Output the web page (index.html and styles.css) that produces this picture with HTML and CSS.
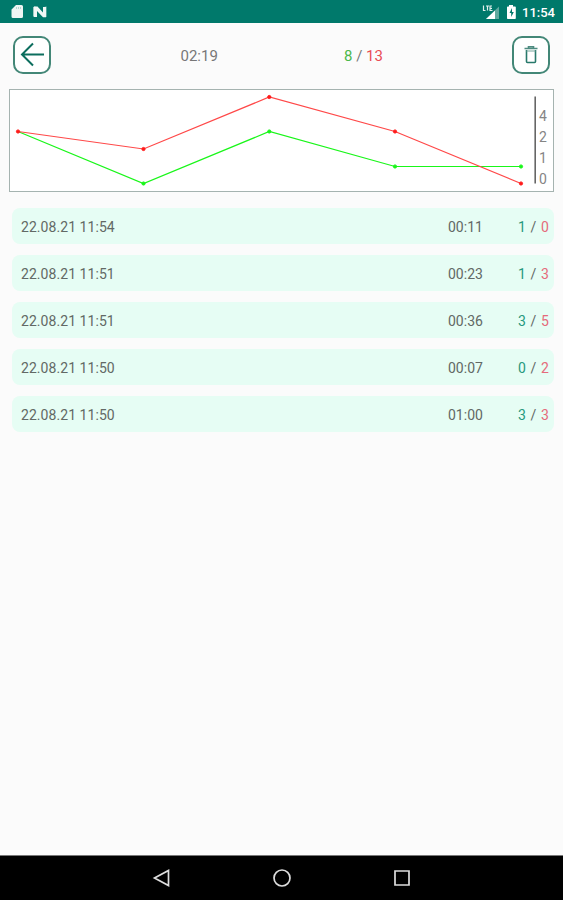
FILE: index.html
```
<!DOCTYPE html>
<html>
<head>
    <meta charset="UTF-8">
    <title>History</title>
    <link rel="stylesheet" href="styles.css">
</head>
<body>
    <div id="status">
        <svg class="left" width="40" height="16" viewBox="0 0 40 16">
            <path d="M6 1H11.500a1.500 1.500 0 0 1 1.500 1.500v10a1.500 1.500 0 0 1-1.500 1.500H3a1.500 1.500 0 0 1-1.500-1.500V5.500z" fill="#eef5f3"/>
            <path d="M6.500 3v2M8.500 3v2M10.500 3v2" stroke="#b5d6d0" stroke-width="1"/>
            <path d="M23 3l2.500-.5V13L23 12.500zM34 3l2.500-.5V13L34 12.500z" fill="#9fcbc3"/>
            <path d="M24 2.500h3.500l5.500 6V3h3v10.200h-3L27 7v6h-3z" fill="#f0f7f5"/>
        </svg>
        <svg class="right" width="36" height="18" viewBox="0 0 36 18">
            <path d="M17 3.500V16H4z" fill="#5fa99f"/>
            <path d="M13 7.400V16H4z" fill="#fff"/>
            <path d="M1.500 2.500v5h2M4 3h3M5.500 3v4.500M10 3H8v4.500h2.500M8 5.300h2" fill="none" stroke="#e1efec" stroke-width="1.200"/>
            <path d="M27 2h4v1.500h2a.8.8 0 0 1 .8.8v11a.8.8 0 0 1-.8.800h-7.200a.8.8 0 0 1-.8-.8v-11a.8.8 0 0 1 .8-.800H27z" fill="#fff"/>
            <path d="M30 5l-2.500 5h1.700v4l2.600-5h-1.800z" fill="#00796b"/>
        </svg>
        <span>11:54</span>
    </div>
    <div id="top">
        <div class="btn">
            <svg width="38" height="38" viewBox="0 0 38 38">
                <path d="M31 18.500H9M20 7.500L9 18.500 20 29.500" fill="none" stroke="#0c6e5e" stroke-width="2"/>
            </svg>
        </div>
        <span class="total">02:19</span>
        <span class="sum"><b class="good">8</b> / <b class="bad">13</b></span>
        <div class="btn">
            <svg width="38" height="38" viewBox="0 0 38 38">
                <path d="M12.500 12.500h13M16.500 11.800v-1h5v1" fill="none" stroke="#4d8b80" stroke-width="1.600"/>
                <path d="M14.500 14v11.500a1 1 0 0 0 1 1h7a1 1 0 0 0 1-1V14" fill="none" stroke="#28796b" stroke-width="1.600"/>
                <path d="M14.500 15h9" stroke="#76a69d" stroke-width="1"/>
            </svg>
        </div>
    </div>
    <div id="chart">
        <svg width="526" height="101" viewBox="0 0 526 101">
            <g stroke="#19f619" fill="#19f619">
                <polyline points="8,41.500 133.500,93.500 259.300,41.500 385,76.500 511,76.500" fill="none" stroke-width="1.200"/>
                <circle cx="133.500" cy="93.500" r="1.600"/>
                <circle cx="259.300" cy="41.500" r="1.600"/>
                <circle cx="385" cy="76.500" r="1.600"/>
                <circle cx="511" cy="76.500" r="1.600"/>
            </g>
            <g stroke="#ff1a1a" fill="#ff1a1a">
                <polyline points="8,41.500 133.500,59 259.300,7 385,41.500 511,93.500" fill="none" stroke="#ff4848" stroke-width="1.200"/>
                <circle cx="8" cy="41.500" r="1.600"/>
                <circle cx="133.500" cy="59" r="1.600"/>
                <circle cx="259.300" cy="7" r="1.600"/>
                <circle cx="385" cy="41.500" r="1.600"/>
                <circle cx="511" cy="93.500" r="1.600"/>
            </g>
            <path d="M525.200 6.500v87" stroke="#666" stroke-width="1.600"/>
        </svg>
        <div class="scale">
            <span>4</span>
            <span>2</span>
            <span>1</span>
            <span>0</span>
        </div>
    </div>
    <ul id="list">
        <li><span>22.08.21 11:54</span><span class="time">00:11</span><span class="res"><b class="good">1</b> / <b class="bad">0</b></span></li>
        <li><span>22.08.21 11:51</span><span class="time">00:23</span><span class="res"><b class="good">1</b> / <b class="bad">3</b></span></li>
        <li><span>22.08.21 11:51</span><span class="time">00:36</span><span class="res"><b class="good">3</b> / <b class="bad">5</b></span></li>
        <li><span>22.08.21 11:50</span><span class="time">00:07</span><span class="res"><b class="good">0</b> / <b class="bad">2</b></span></li>
        <li><span>22.08.21 11:50</span><span class="time">01:00</span><span class="res"><b class="good">3</b> / <b class="bad">3</b></span></li>
    </ul>
    <div id="nav">
        <svg width="20" height="20" viewBox="0 0 20 20"><path d="M16.500 2.500v15L2.500 10z"/></svg>
        <svg width="20" height="20" viewBox="0 0 20 20"><circle cx="10" cy="10" r="8"/></svg>
        <svg width="20" height="20" viewBox="0 0 20 20"><path d="M3 3h14v14H3z"/></svg>
    </div>
</body>
</html>
```
FILE: styles.css
```
*{
    margin: 0px;
    padding: 0px;
    box-sizing: border-box;
}
body{
    height: 900px;
    display: flex;
    flex-direction: column;
    background: #fbfbfb;
    color: #626965;
    font-family: Roboto, sans-serif;
    font-size: 14px;
    overflow: hidden;
}
svg{
    display: block;
}
b{
    font-weight: normal;
}
/* status bar */
#status{
    height: 23px;
    padding: 1px 8px 0 10px;
    display: flex;
    align-items: center;
    background: #00796b;
    color: #fff;
    font-weight: 500;
}
#status .left{
    margin-right: auto;
}
#status .right{
    margin-right: 4px;
}
#status span{
    font-size: 13px;
}
/* header */
#top{
    height: 66px;
    padding: 0 13px;
    display: grid;
    grid-template-columns: 167.5px 163.5px 1fr 38px;
    align-items: center;
    font-size: 15px;
    color: #777;
}
#top .btn{
    width: 38px;
    height: 38px;
    border-radius: 10px;
    border: 2px solid #438777;
    display: flex;
    align-items: center;
    justify-content: center;
    background: #fff;
    position: relative;
    top: -1px;
}
#top .btn svg{
    flex-shrink: 0;
}
#top .good{
    color: #4bb84b;
}
#top .bad{
    color: #e94b55;
}
/* chart */
#chart{
    height: 103px;
    margin: 0 9px 0 9px;
    border: 1.5px solid #a5b3b0;
    display: flex;
    background: #fff;
}
#chart .scale{
    padding: 16px 0 0 3px;
    font-size: 14px;
    line-height: 21px;
    color: #858585;
}
#chart .scale span{
    display: block;
}
/* results */
#list{
    flex: 1;
    margin: 16px 9px 0 12px;
    list-style: none;
}
#list li{
    height: 36px;
    margin-bottom: 11px;
    padding: 1px 5px 0 9px;
    display: flex;
    align-items: center;
    border-radius: 8px;
    background: #e6fdf4;
}
#list .time{
    margin-left: auto;
    width: 70px;
}
#list .res{
    width: 31px;
    word-spacing: 1.2px;
    white-space: nowrap;
}
#list .good{
    color: #27997d;
}
#list .bad{
    color: #e56b7b;
}
#list li span:first-child{
    letter-spacing: 0.06px;
}
/* navigation bar */
#nav{
    height: 45px;
    padding-left: 1px;
    border-top: 1px solid #777;
    display: flex;
    align-items: center;
    justify-content: center;
    gap: 100px;
    background: #000;
}
#nav svg{
    fill: none;
    stroke: #ddd;
    stroke-width: 1.7;
}
```
